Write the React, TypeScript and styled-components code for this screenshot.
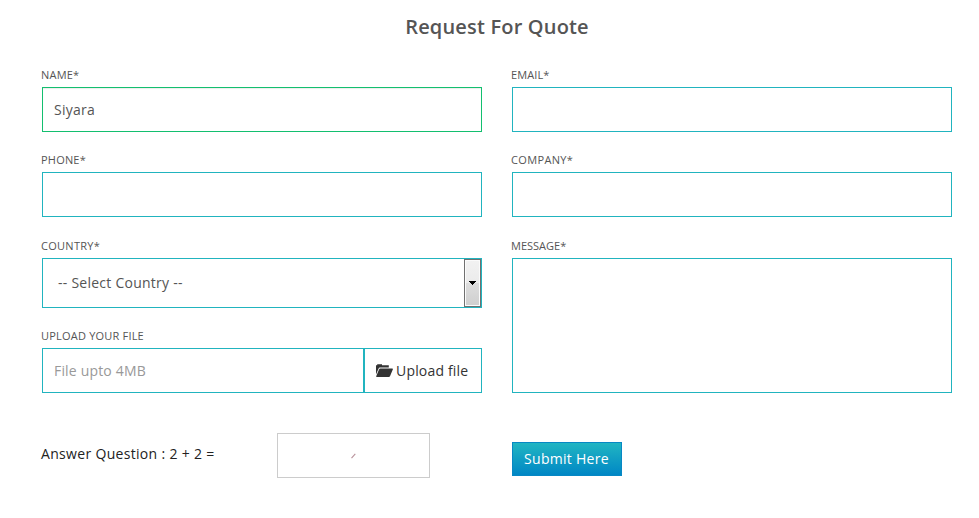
import React from "react";
import styled, { createGlobalStyle } from "styled-components";

const GlobalStyle = createGlobalStyle`
  *, *::before, *::after { box-sizing: border-box; }
  body {
    margin: 0;
    background: #fff;
    color: #555;
    font-family: "Open Sans", "Noto Sans", sans-serif;
    font-size: 14px;
    overflow: hidden;
  }
`;

const Page = styled.form`
  width: 979px;
  height: 518px;
  padding: 12px 27px 0 42px;
`;

const Title = styled.h1`
  margin: 0 0 21px;
  height: 30px;
  font-size: 20px;
  font-weight: 550;
  letter-spacing: 0.18px;
  line-height: 30px;
  text-align: center;
  color: #555;
`;

const Columns = styled.div`
  display: grid;
  grid-template-columns: 440px 440px;
  column-gap: 30px;
`;

const Column = styled.div`
  display: flex;
  flex-direction: column;
`;

const Field = styled.div<{ $gap?: number }>`
  display: flex;
  flex-direction: column;
  margin-bottom: ${(p) => p.$gap ?? 16}px;
`;

const Label = styled.label<{ $tracking?: number }>`
  height: 24px;
  margin-left: -1px;
  font-size: 11px;
  letter-spacing: ${(p) => p.$tracking ?? 0.2}px;
  line-height: 24px;
  text-transform: uppercase;
  color: #555;
`;

const Input = styled.input<{ $valid?: boolean }>`
  width: 100%;
  height: 45px;
  padding: 0 11px;
  border: 1px solid ${(p) => (p.$valid ? "#13bf6f" : "#21b4bf")};
  border-radius: 0;
  outline: none;
  background: #fff;
  box-shadow: ${(p) => (p.$valid ? "inset 0 1px 1px rgba(0, 0, 0, 0.075)" : "none")};
  color: #555;
  font: 14px "Open Sans", sans-serif;
  letter-spacing: 0.25px;

  &::placeholder { color: #999; opacity: 1; letter-spacing: 0.18px; }
`;

const TextArea = styled.textarea`
  display: block;
  width: 100%;
  height: 135px;
  padding: 11px;
  border: 1px solid #21b4bf;
  border-radius: 0;
  outline: none;
  resize: none;
  font: 14px "Open Sans", sans-serif;
`;

const SelectBox = styled.div`
  display: flex;
  align-items: stretch;
  justify-content: space-between;
  height: 50px;
  border: 1px solid #21b4bf;
  color: #555;
`;

const SelectValue = styled.span`
  padding-left: 15px;
  line-height: 47px;
  letter-spacing: 0.25px;
`;

const SelectArrow = styled.span`
  display: flex;
  align-items: center;
  justify-content: center;
  width: 17px;
  border: 1px solid #707070;
  background: linear-gradient(#f2f2f2 0%, #ebebeb 50%, #dddddd 50%, #cfcfcf 100%);
  box-shadow: inset 0 0 0 1px #fbfbfb;
`;

const UploadRow = styled.div`
  display: grid;
  grid-template-columns: 322px 118px;
`;

const UploadButton = styled.button`
  display: flex;
  align-items: center;
  gap: 3px;
  height: 45px;
  padding: 0 0 0 11px;
  border: 1px solid #21b4bf;
  background: #fff;
  color: #333;
  font: 14px "Open Sans", sans-serif;
  letter-spacing: 0.18px;
  white-space: nowrap;
`;

const Footer = styled.div`
  display: grid;
  grid-template-columns: 235px 235px auto;
  align-items: start;
  justify-content: start;
  margin-top: 40px;
`;

const Question = styled.span`
  margin-left: -1px;
  line-height: 42px;
  letter-spacing: 0.32px;
  color: #222;
`;

const AnswerBox = styled.div`
  display: flex;
  align-items: center;
  justify-content: center;
  width: 153px;
  height: 45px;
  border: 1px solid #ccc;
`;

const Submit = styled.button`
  width: 110px;
  height: 34px;
  margin-top: 9px;
  padding: 0 1px 1px 0;
  border: 1px solid #0788c4;
  border-radius: 0;
  background: linear-gradient(#21b5c2, #0087c5);
  color: #fff;
  font: 14px "Open Sans", sans-serif;
  letter-spacing: 0.28px;
`;

const FolderIcon = () => (
  <svg width="17" height="13" viewBox="0 0 17 13" fill="#333" aria-hidden="true">
    <path d="M0 10.5V1.2H1.2V.2H6V1.2H12.8V3.6H3.8Q3 3.6 2.6 4.4Z" />
    <path d="M4.3 4.6H16.4Q17.2 4.6 16.8 5.4L14.1 12Q13.7 13 12.8 13H.7Q-.1 13 .3 12L3 5.4Q3.4 4.6 4.3 4.6Z" />
  </svg>
);

const ArrowIcon = () => (
  <svg width="7" height="4" viewBox="0 0 7 4" shapeRendering="crispEdges" aria-hidden="true">
    <path d="M0 0H7V1H6V2H5V3H4V4H3V3H2V2H1V1H0Z" fill="#000" />
  </svg>
);

const SlashMark = () => (
  <svg width="5" height="6" viewBox="0 0 5 6" aria-hidden="true">
    <path d="M.5 5.2L4.3 .8" stroke="#b9929b" strokeWidth="1.1" fill="none" />
  </svg>
);

export default function App() {
  return (
    <>
      <GlobalStyle />
      <Page onSubmit={(e) => e.preventDefault()}>
        <Title>Request For Quote</Title>
        <Columns>
          <Column>
            <Field>
              <Label htmlFor="name">Name*</Label>
              <Input id="name" defaultValue="Siyara" $valid />
            </Field>
            <Field $gap={17}>
              <Label htmlFor="phone">Phone*</Label>
              <Input id="phone" />
            </Field>
            <Field>
              <Label $tracking={0.28}>Country*</Label>
              <SelectBox>
                <SelectValue>-- Select Country --</SelectValue>
                <SelectArrow>
                  <ArrowIcon />
                </SelectArrow>
              </SelectBox>
            </Field>
            <Field $gap={0}>
              <Label htmlFor="file">Upload your file</Label>
              <UploadRow>
                <Input id="file" placeholder="File upto 4MB" readOnly />
                <UploadButton type="button">
                  <FolderIcon />
                  Upload file
                </UploadButton>
              </UploadRow>
            </Field>
          </Column>
          <Column>
            <Field>
              <Label htmlFor="email" $tracking={0.1}>Email*</Label>
              <Input id="email" />
            </Field>
            <Field $gap={17}>
              <Label htmlFor="company" $tracking={0.35}>Company*</Label>
              <Input id="company" />
            </Field>
            <Field $gap={0}>
              <Label htmlFor="message" $tracking={0}>Message*</Label>
              <TextArea id="message" />
            </Field>
          </Column>
        </Columns>
        <Footer>
          <Question>Answer Question : 2 + 2 =</Question>
          <AnswerBox>
            <SlashMark />
          </AnswerBox>
          <Submit type="submit">Submit Here</Submit>
        </Footer>
      </Page>
    </>
  );
}
